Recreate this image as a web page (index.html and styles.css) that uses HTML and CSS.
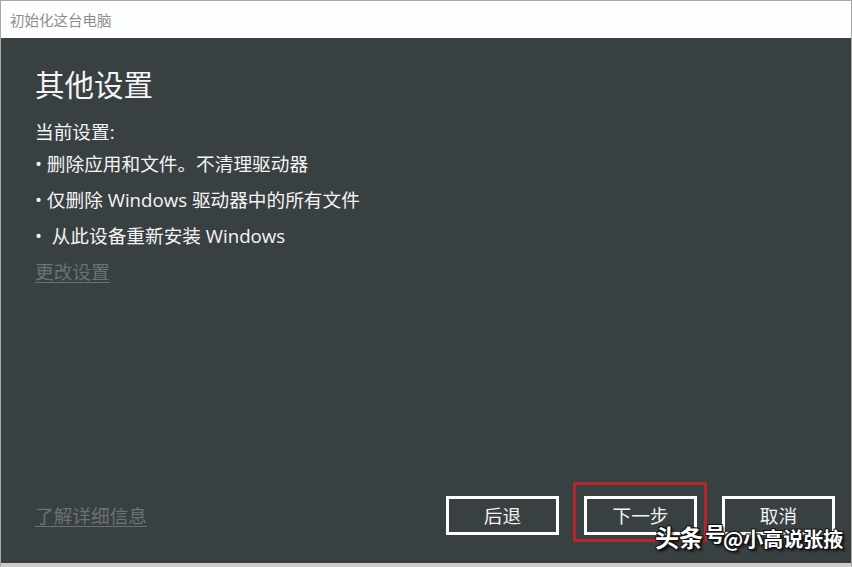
FILE: index.html
```html
<!DOCTYPE html>
<html lang="zh-CN">
<head>
  <meta charset="UTF-8">
  <title>初始化这台电脑</title>
  <link rel="stylesheet" href="styles.css">
</head>
<body>
  <div class="window">
    <div class="titlebar">初始化这台电脑</div>

    <div class="content">
      <h1 class="heading">其他设置</h1>
      <div class="label">当前设置:</div>
      <ul class="settings">
        <li>• 删除应用和文件。不清理驱动器</li>
        <li>• 仅删除 Windows 驱动器中的所有文件</li>
        <li>•&nbsp; 从此设备重新安装 Windows</li>
      </ul>
      <a href="#" class="link">更改设置</a>

      <div class="footer">
        <a href="#" class="link">了解详细信息</a>
        <div class="buttons">
          <button class="btn">后退</button>
          <button class="btn btn-next">下一步</button>
          <button class="btn">取消</button>
        </div>
      </div>
    </div>

    <div class="bottom-strip"><span>了解详细信息&nbsp;&nbsp; 重置 &nbsp;此电脑</span></div>

    <div class="watermark"><span class="wm-big">头条</span><span class="wm-small">号</span>@小高说张掖</div>
  </div>
</body>
</html>
```

FILE: styles.css
```css
* {
  box-sizing: border-box;
}

html, body {
  margin: 0;
  height: 100%;
}

body {
  font-family: "Open Sans", "Noto Sans CJK SC", sans-serif;
  background: #ffffff;
}

.window {
  position: relative;
  height: 567px;
  display: flex;
  flex-direction: column;
  border: 1px solid #a8a8a8;
  border-bottom: none;
  background: #ffffff;
  overflow: hidden;
}

.titlebar {
  height: 37px;
  padding-left: 9px;
  display: flex;
  align-items: center;
  font-family: "Noto Sans CJK SC", sans-serif;
  font-size: 14.5px;
  color: #8e8e8e;
  background: #fdfefe;
}

.content {
  flex: 1;
  display: flex;
  flex-direction: column;
  align-items: flex-start;
  padding: 25px 16px 28px 34px;
  background: #394042;
  color: #f4f4f4;
  font-size: 18.67px;
}

.heading {
  margin: 0 0 15px;
  font-family: "Noto Sans CJK SC", sans-serif;
  font-weight: normal;
  font-size: 29.5px;
  line-height: 40px;
  color: #f5f5f5;
}

.label {
  line-height: 28px;
}

.settings {
  list-style: none;
  margin: 0;
  padding: 0;
}

.settings li {
  line-height: 36px;
}

.link {
  line-height: 36px;
  color: #6b7274;
  text-decoration: underline;
  text-underline-offset: 3px;
}

.footer {
  margin-top: auto;
  width: 100%;
  display: flex;
  justify-content: space-between;
  align-items: center;
}

.buttons {
  display: flex;
  gap: 25px;
}

.btn {
  position: relative;
  width: 113px;
  height: 39px;
  padding: 0;
  border: 3px solid #ffffff;
  background: #394042;
  color: #f2f2f2;
  font-family: "Noto Sans CJK SC", sans-serif;
  font-size: 18.67px;
  line-height: 1;
}

.btn-next::after {
  content: "";
  position: absolute;
  top: -17px;
  left: -14px;
  right: -13px;
  bottom: -10px;
  border: 3px solid #b3272c;
}

.bottom-strip {
  height: 4px;
  background: #cdcdcd;
  padding-left: 50px;
  overflow: hidden;
  font-size: 18px;
  line-height: 26px;
  color: #2a2a2a;
}

.bottom-strip span {
  display: block;
  font-family: "Noto Sans CJK SC", sans-serif;
  font-weight: bold;
}

.watermark {
  position: absolute;
  left: 654px;
  top: 518px;
  font-family: "Noto Sans CJK SC", sans-serif;
  font-weight: bold;
  font-size: 20px;
  color: #ffffff;
  white-space: nowrap;
  text-shadow: 1px 1px 0 #111, -1px 1px 0 #111, 1px -1px 0 #111, -1px -1px 0 #111, 2px 2px 3px #000;
}

.wm-big {
  font-size: 24px;
}

.wm-small {
  display: inline-block;
  margin: 0 -2px 0 2px;
  font-size: 20px;
  vertical-align: 5px;
}
```
